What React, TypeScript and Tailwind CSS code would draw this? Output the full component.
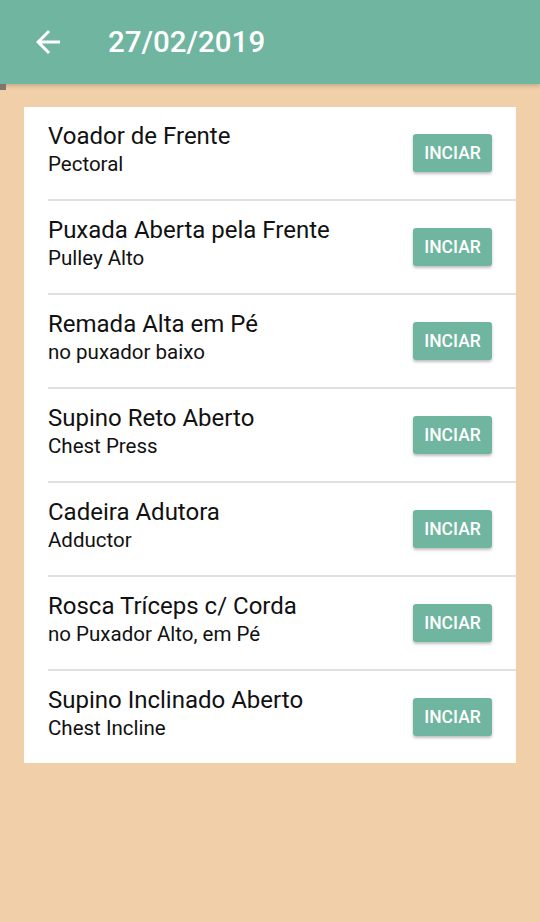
const items = [
  { title: "Voador de Frente", sub: "Pectoral" },
  { title: "Puxada Aberta pela Frente", sub: "Pulley Alto" },
  { title: "Remada Alta em Pé", sub: "no puxador baixo" },
  { title: "Supino Reto Aberto", sub: "Chest Press" },
  { title: "Cadeira Adutora", sub: "Adductor" },
  { title: "Rosca Tríceps c/ Corda", sub: "no Puxador Alto, em Pé" },
  { title: "Supino Inclinado Aberto", sub: "Chest Incline" },
];

export default function App() {
  return (
    <div className="relative min-h-[922px] w-[540px] bg-[#f0cfa9] font-['Roboto',sans-serif]">
      <header className="relative z-10 flex h-[84px] items-center bg-[#6fb5a0] shadow-[0_2px_4px_rgba(0,0,0,0.18)]">
        <svg className="ml-[36px] h-[24px] w-[24px]" viewBox="4 4 16 16" fill="white">
          <path d="M20 11H7.83l5.59-5.59L12 4l-8 8 8 8 1.41-1.41L7.83 13H20v-2z" />
        </svg>
        <h1 className="ml-[48px] text-[29.5px] font-medium text-white">27/02/2019</h1>
      </header>
      <div className="absolute left-0 top-[84px] z-20 h-[6px] w-[6px] bg-[#80766a]" />
      <div className="px-[24px] pt-[23px]">
        <ul className="bg-white">
          {items.map((it, i) => (
            <li key={i} className={i > 0 ? "ml-[24px] border-t-2 border-[#e0e0e0]" : "ml-[24px]"}>
              <div className="flex h-[92px] items-center justify-between pr-[24px]">
                <div className="flex flex-col pb-[6px]">
                  <span className="text-[24px] leading-[28px] text-[#111]">{it.title}</span>
                  <span className="text-[20.5px] leading-[28px] text-[#111]">{it.sub}</span>
                </div>
                <button className="h-[38px] w-[79px] rounded-[3px] bg-[#6fb5a0] text-[17.5px] font-medium text-white shadow-[0_2px_3px_rgba(0,0,0,0.25)]">
                  INCIAR
                </button>
              </div>
            </li>
          ))}
        </ul>
      </div>
    </div>
  );
}
